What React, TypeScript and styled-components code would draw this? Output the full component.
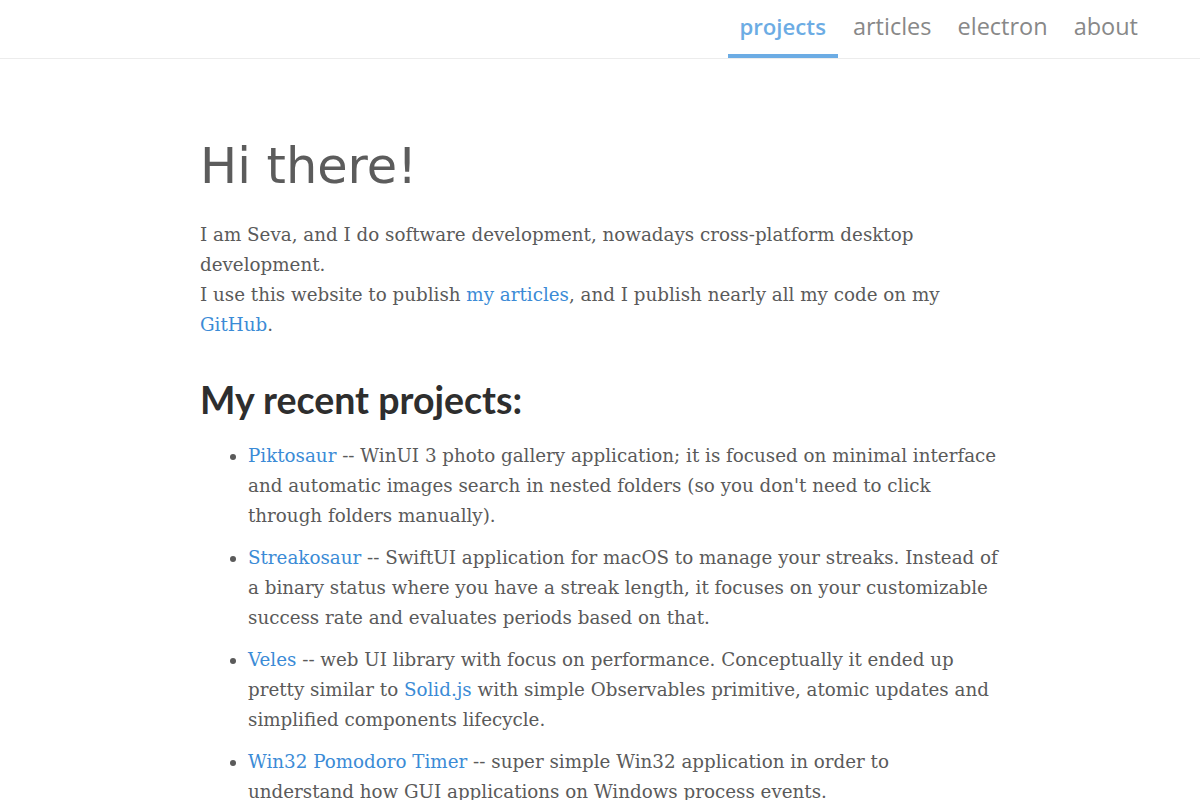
import React from "react";
import styled, { createGlobalStyle } from "styled-components";

const GlobalStyle = createGlobalStyle`
  body {
    margin: 0;
    background: #fff;
    font-family: "DejaVu Serif", "Liberation Serif", serif;
    color: #5a5a5a;
  }
`;

const Header = styled.header`
  display: flex;
  justify-content: flex-end;
  height: 58px;
  border-bottom: 1px solid #ececec;
  padding-right: 49px;
`;

const Nav = styled.nav`
  display: flex;
  align-items: stretch;
`;

const NavItem = styled.a<{ $active?: boolean }>`
  display: flex;
  align-items: center;
  padding: ${(p) => (p.$active ? "0 12px 2px 11px" : "0 13px 2px")};
  margin-right: ${(p) => (p.$active ? "2px" : "0")};
  font-family: "Open Sans", "Noto Sans", sans-serif;
  font-size: ${(p) => (p.$active ? "22.2px" : "23.5px")};
  font-weight: ${(p) => (p.$active ? 600 : 400)};
  color: ${(p) => (p.$active ? "#6cace4" : "#888")};
  text-decoration: none;
  border-bottom: 4px solid ${(p) => (p.$active ? "#6cace4" : "transparent")};
`;

const Main = styled.main`
  width: 800px;
  margin: 0 auto;
  padding-top: 77px;
`;

const Title = styled.h1`
  margin: 0 0 24px;
  font-family: "DejaVu Sans", sans-serif;
  font-size: 49.4px;
  font-weight: 400;
  line-height: 60px;
  color: #5c5c5c;
`;

const Text = styled.p`
  margin: 0;
  font-size: 18.3px;
  line-height: 30px;
`;

const Link = styled.a`
  color: #3b8bd6;
  text-decoration: none;
`;

const Subtitle = styled.h2`
  margin: 38px 0 19px;
  font-family: "Lato", sans-serif;
  font-size: 37.5px;
  font-weight: 700;
  line-height: 44px;
  color: #2e2e2e;
`;

const List = styled.ul`
  margin: 0;
  padding-left: 48px;
`;

const Item = styled.li`
  font-size: 18.3px;
  line-height: 30px;
  margin-bottom: 12px;
`;

export default function App() {
  return (
    <>
      <GlobalStyle />
      <Header>
        <Nav>
          <NavItem href="#" $active>projects</NavItem>
          <NavItem href="#">articles</NavItem>
          <NavItem href="#">electron</NavItem>
          <NavItem href="#">about</NavItem>
        </Nav>
      </Header>
      <Main>
        <Title>Hi there!</Title>
        <Text>
          I am Seva, and I do software development, nowadays cross-platform desktop development.
          <br />
          I use this website to publish <Link href="#">my articles</Link>, and I publish nearly all my code on my{" "}
          <Link href="#">GitHub</Link>.
        </Text>
        <Subtitle>My recent projects:</Subtitle>
        <List>
          <Item>
            <Link href="#">Piktosaur</Link> -- WinUI 3 photo gallery application; it is focused on minimal interface
            and automatic images search in nested folders (so you don't need to click through folders manually).
          </Item>
          <Item>
            <Link href="#">Streakosaur</Link> -- SwiftUI application for macOS to manage your streaks. Instead of a
            binary status where you have a streak length, it focuses on your customizable success rate and evaluates
            periods based on that.
          </Item>
          <Item>
            <Link href="#">Veles</Link> -- web UI library with focus on performance. Conceptually it ended up pretty
            similar to <Link href="#">Solid.js</Link> with simple Observables primitive, atomic updates and simplified
            components lifecycle.
          </Item>
          <Item>
            <Link href="#">Win32 Pomodoro Timer</Link> -- super simple Win32 application in order to understand how
            GUI applications on Windows process events.
          </Item>
        </List>
      </Main>
    </>
  );
}
